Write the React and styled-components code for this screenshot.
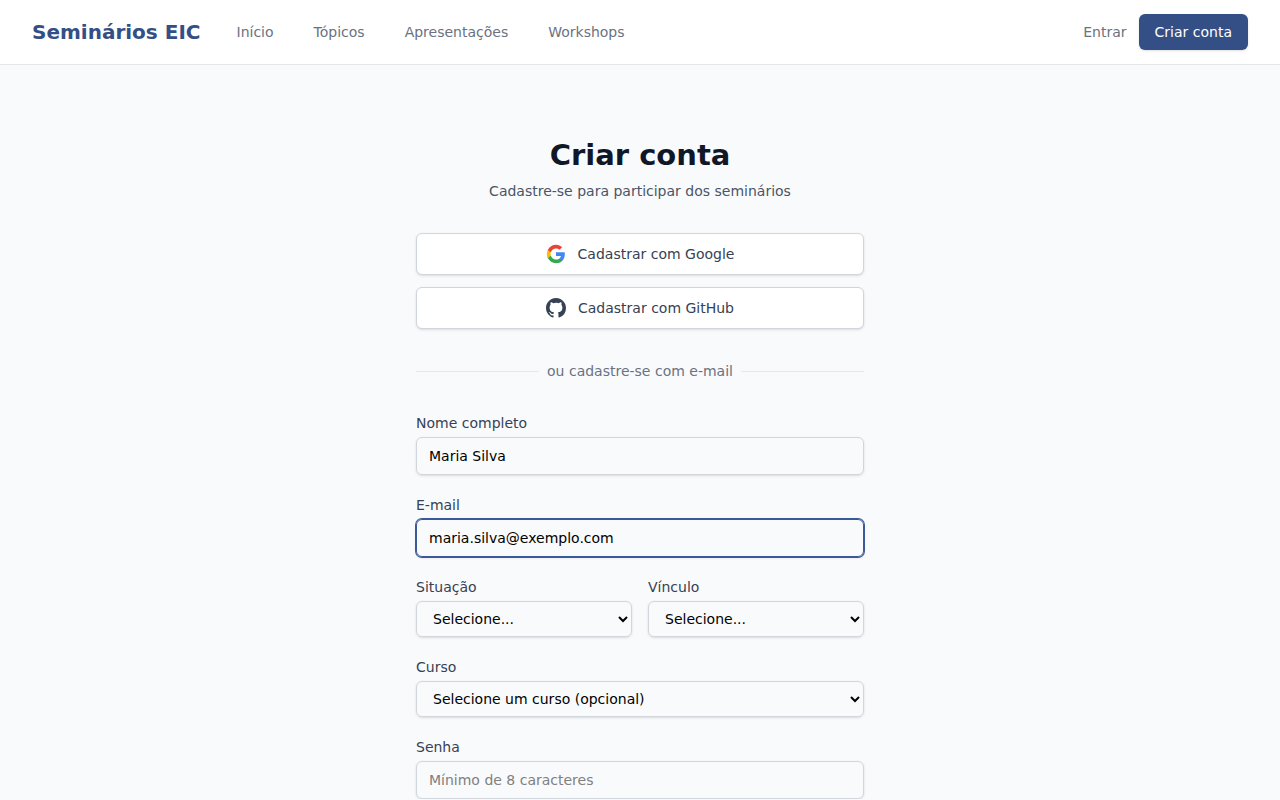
import React, { useState } from "react";
import styled, { createGlobalStyle } from "styled-components";

export default function App() {
  const [name, setName] = useState("Maria Silva");
  const [email, setEmail] = useState("maria.silva@exemplo.com");
  const [password, setPassword] = useState("");

  return (
    <>
      <GlobalStyle />
      <Header>
        <Brand href="#">Seminários EIC</Brand>
        <NavList>
          <li><NavLink href="#inicio">Início</NavLink></li>
          <li><NavLink href="#topicos">Tópicos</NavLink></li>
          <li><NavLink href="#apresentacoes">Apresentações</NavLink></li>
          <li><NavLink href="#workshops">Workshops</NavLink></li>
        </NavList>
        <Actions>
          <SignInLink href="#entrar">Entrar</SignInLink>
          <SignUpLink href="#criar-conta">Criar conta</SignUpLink>
        </Actions>
      </Header>
      <Main>
        <Content>
          <Title>Criar conta</Title>
          <Subtitle>Cadastre-se para participar dos seminários</Subtitle>
          <Providers>
            <ProviderButton type="button">
              <GoogleIcon />
              Cadastrar com Google
            </ProviderButton>
            <ProviderButton type="button">
              <GithubIcon />
              Cadastrar com GitHub
            </ProviderButton>
          </Providers>
          <Divider>ou cadastre-se com e-mail</Divider>
          <Form>
            <Field>
              <Label htmlFor="name">Nome completo</Label>
              <Input
                id="name"
                type="text"
                value={name}
                onChange={(e) => setName(e.target.value)}
              />
            </Field>
            <Field>
              <Label htmlFor="email">E-mail</Label>
              <Input
                id="email"
                type="email"
                autoFocus
                value={email}
                onChange={(e) => setEmail(e.target.value)}
              />
            </Field>
            <FieldRow>
              <Field>
                <Label htmlFor="status">Situação</Label>
                <Select id="status">
                  <option value="">Selecione...</option>
                </Select>
              </Field>
              <Field>
                <Label htmlFor="bond">Vínculo</Label>
                <Select id="bond">
                  <option value="">Selecione...</option>
                </Select>
              </Field>
            </FieldRow>
            <Field>
              <Label htmlFor="course">Curso</Label>
              <Select id="course">
                <option value="">Selecione um curso (opcional)</option>
              </Select>
            </Field>
            <Field>
              <Label htmlFor="password">Senha</Label>
              <Input
                id="password"
                type="password"
                placeholder="Mínimo de 8 caracteres"
                value={password}
                onChange={(e) => setPassword(e.target.value)}
              />
            </Field>
          </Form>
        </Content>
      </Main>
    </>
  );
}

function GoogleIcon() {
  return (
    <Icon viewBox="0 0 24 24" aria-hidden="true">
      <path fill="#4285F4" d="M22.56 12.25c0-.78-.07-1.53-.2-2.25H12v4.26h5.92c-.26 1.37-1.04 2.53-2.21 3.31v2.77h3.57c2.08-1.92 3.28-4.74 3.28-8.09z" />
      <path fill="#34A853" d="M12 23c2.97 0 5.46-.98 7.28-2.66l-3.57-2.77c-.98.66-2.23 1.06-3.71 1.06-2.86 0-5.29-1.93-6.16-4.53H2.18v2.84C3.99 20.53 7.7 23 12 23z" />
      <path fill="#FBBC05" d="M5.84 14.09c-.22-.66-.35-1.36-.35-2.09s.13-1.43.35-2.09V7.07H2.18C1.43 8.55 1 10.22 1 12s.43 3.45 1.18 4.93l2.85-2.22.81-.62z" />
      <path fill="#EA4335" d="M12 5.38c1.62 0 3.06.56 4.21 1.64l3.15-3.15C17.45 2.09 14.97 1 12 1 7.7 1 3.99 3.47 2.18 7.07l3.66 2.84c.87-2.6 3.3-4.53 6.16-4.53z" />
    </Icon>
  );
}

function GithubIcon() {
  return (
    <Icon viewBox="0 0 20 20" fill="currentColor" aria-hidden="true">
      <path
        fillRule="evenodd"
        clipRule="evenodd"
        d="M10 0C4.477 0 0 4.484 0 10.017c0 4.425 2.865 8.18 6.839 9.504.5.092.682-.217.682-.483 0-.237-.008-.868-.013-1.703-2.782.605-3.369-1.343-3.369-1.343-.454-1.158-1.11-1.466-1.11-1.466-.908-.62.069-.608.069-.608 1.003.07 1.531 1.032 1.531 1.032.892 1.53 2.341 1.088 2.91.832.092-.647.35-1.088.636-1.338-2.22-.253-4.555-1.113-4.555-4.951 0-1.093.39-1.988 1.029-2.688-.103-.253-.446-1.272.098-2.65 0 0 .84-.27 2.75 1.026A9.564 9.564 0 0110 4.844c.85.004 1.705.115 2.504.337 1.909-1.296 2.747-1.027 2.747-1.027.546 1.379.203 2.398.1 2.651.64.7 1.028 1.595 1.028 2.688 0 3.848-2.339 4.695-4.566 4.942.359.31.678.921.678 1.856 0 1.338-.012 2.419-.012 2.747 0 .268.18.58.688.482A10.019 10.019 0 0020 10.017C20 4.484 15.522 0 10 0z"
      />
    </Icon>
  );
}

const GlobalStyle = createGlobalStyle`
  :root {
    --primary: #344f86;
    --ring: #3b5998;
    --border: #d1d5dc;
    --shadow: 0 1px 3px 0 rgba(0, 0, 0, 0.1), 0 1px 2px -1px rgba(0, 0, 0, 0.1);
  }

  *, *::before, *::after {
    box-sizing: border-box;
  }

  body {
    margin: 0;
    background: #f9fafc;
    color: #000;
    font-family: "DejaVu Sans", sans-serif;
    font-size: 16px;
    line-height: 24px;
  }

  a {
    text-decoration: none;
  }
`;

const Header = styled.header`
  display: flex;
  align-items: center;
  min-height: 65px;
  padding: 0 32px;
  background: #fff;
  border-bottom: 1px solid #e5e7eb;
`;

const Brand = styled.a`
  color: var(--primary);
  font-size: 20px;
  font-weight: 700;
  line-height: 28px;
`;

const NavList = styled.ul`
  display: flex;
  gap: 16px;
  margin: 0 0 0 24px;
  padding: 0;
  list-style: none;
`;

const NavLink = styled.a`
  padding: 8px 12px;
  color: #6a7282;
  font-size: 14px;
  line-height: 20px;
`;

const Actions = styled.div`
  display: flex;
  align-items: center;
  gap: 12px;
  margin-left: auto;
  font-size: 14px;
  line-height: 20px;
`;

const SignInLink = styled.a`
  color: #6a7282;
`;

const SignUpLink = styled.a`
  padding: 8px 16px;
  border-radius: 6px;
  background: var(--primary);
  box-shadow: var(--shadow);
  color: #fff;
`;

const Main = styled.main`
  padding: 72px 32px 0;
`;

const Content = styled.div`
  max-width: 448px;
  margin: 0 auto;
`;

const Title = styled.h1`
  margin: 0;
  color: #101828;
  font-size: 29px;
  font-weight: 700;
  line-height: 36px;
  text-align: center;
`;

const Subtitle = styled.p`
  margin: 8px 0 32px;
  color: #4a5565;
  font-size: 14px;
  line-height: 20px;
  text-align: center;
`;

const Providers = styled.div`
  display: flex;
  flex-direction: column;
  gap: 12px;
`;

const ProviderButton = styled.button`
  display: flex;
  align-items: center;
  justify-content: center;
  gap: 12px;
  padding: 10px 16px;
  border: 1px solid var(--border);
  border-radius: 6px;
  background: #fff;
  box-shadow: var(--shadow);
  color: #364153;
  font-family: inherit;
  font-size: 14px;
  line-height: 20px;
  cursor: pointer;
`;

const Icon = styled.svg`
  width: 20px;
  height: 20px;
`;

const Divider = styled.div`
  display: flex;
  align-items: center;
  gap: 8px;
  margin: 32px 0;
  color: #6a7282;
  font-size: 14px;
  line-height: 20px;

  &::before,
  &::after {
    content: "";
    flex: 1;
    border-top: 1px solid #e5e7eb;
  }
`;

const Form = styled.form`
  display: flex;
  flex-direction: column;
  gap: 20px;
`;

const Field = styled.div`
  display: flex;
  flex-direction: column;
  gap: 4px;
`;

const FieldRow = styled.div`
  display: grid;
  grid-template-columns: 1fr 1fr;
  gap: 16px;
`;

const Label = styled.label`
  color: #364153;
  font-size: 14px;
  line-height: 20px;
`;

const Input = styled.input`
  width: 100%;
  padding: 8px 12px;
  border: 1px solid var(--border);
  border-radius: 6px;
  background: transparent;
  box-shadow: var(--shadow);
  color: #000;
  font-family: inherit;
  font-size: 14px;
  line-height: 20px;

  &::placeholder {
    color: #808080;
  }

  &:focus {
    outline: none;
    border-color: var(--ring);
    box-shadow: 0 0 0 1px var(--ring), var(--shadow);
  }
`;

const Select = styled.select`
  width: 100%;
  height: 36px;
  padding: 8px 12px;
  border: 1px solid var(--border);
  border-radius: 6px;
  background: transparent;
  box-shadow: var(--shadow);
  color: #000;
  font-family: inherit;
  font-size: 14px;
`;
